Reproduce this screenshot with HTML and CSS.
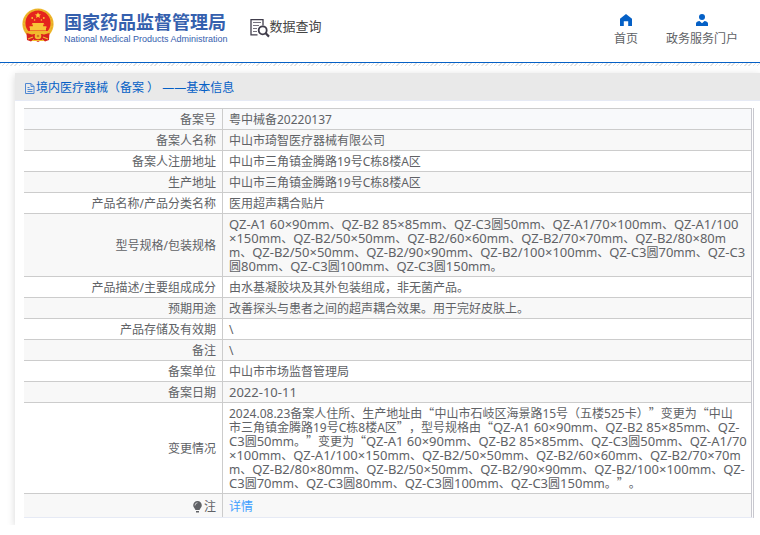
FILE: index.html
```html
<!DOCTYPE html>
<html lang="zh-CN">
<head>
<meta charset="utf-8">
<meta name="viewport" content="width=device-width, initial-scale=1">
<title>国家药品监督管理局 数据查询</title>
<link rel="stylesheet" href="styles.css">
</head>
<body>
<header class="site-header">
  <div class="brand">
    <svg class="emblem" viewBox="0 0 32 34" aria-hidden="true">
      <circle cx="16" cy="16" r="15.6" fill="#f0b92c"/>
      <circle cx="16" cy="16" r="14.2" fill="none" stroke="#e0a426" stroke-width="1" stroke-dasharray="2 1.5"/>
      <circle cx="16" cy="15" r="12.6" fill="#e5241d"/>
      <path d="M16 4.200l.9 2 2.100.2-1.600 1.400.5 2.100-1.900-1.100-1.900 1.100.5-2.100L13 6.400l2.100-.2z" fill="#ffd23a"/>
      <g fill="#ffc933"><circle cx="10.2" cy="10" r=".9"/><circle cx="12.6" cy="12" r=".8"/><circle cx="19.4" cy="12" r=".8"/><circle cx="21.8" cy="10" r=".9"/></g>
      <path d="M10.500 15h11l1 1.600h-1.300v1.600h3l.8 1.300h-1v3H8v-3H7l.8-1.300h3v-1.600H9.500z" fill="#f8c538"/>
      <path d="M5 23h22l-2 3H7z" fill="#f0b92c"/>
      <path d="M4.500 25l7 2 4.500-1.500 4.500 1.500 7-2-.5 7-4 1.500-2.500-2L16 34l-4.500-2.500-2.500 2L5 32z" fill="#d8231d"/>
      <circle cx="16" cy="28" r="3.300" fill="#f3bc31"/>
      <circle cx="16" cy="28" r="1.300" fill="#cf7a20"/>
      <path d="M6 31l5-2M26 31l-5-2M10 32.500h12" stroke="#f3bc31" stroke-width="1.200"/>
    </svg>
    <div class="brand-text">
      <div class="brand-name">国家药品监督管理局</div>
      <div class="brand-sub">National Medical Products Administration</div>
    </div>
  </div>
  <div class="section-name">
    <svg class="query-icon" viewBox="0 0 20 20" aria-hidden="true" fill="none" stroke="#403d4b">
      <path d="M13 7.500V1.600H1v15.200h6.500" stroke-width="1.300"/>
      <path d="M3 4.500h8M3 7.500h6M3 10.500h4M3 13.500h4" stroke="#77747f"/>
      <circle cx="12.700" cy="12.300" r="4" stroke-width="1.800"/>
      <path d="M15.700 15.300l3.300 3.300" stroke-width="2.200"/>
    </svg>
    <span>数据查询</span>
  </div>
  <nav class="site-nav">
    <a href="#">
      <svg viewBox="0 0 12 12" aria-hidden="true"><path d="M6 0l6 4.800V12H8.200V7.200H3.800V12H0V4.800z" fill="#0560c6"/></svg>
      <span>首页</span>
    </a>
    <a href="#">
      <svg viewBox="0 0 12 12" aria-hidden="true"><circle cx="6" cy="3" r="3" fill="#0560c6"/><path d="M0 12V9.500C0 8 1.800 7 3.500 7L6 9.200 8.500 7C10.200 7 12 8 12 9.500V12z" fill="#0560c6"/></svg>
      <span>政务服务门户</span>
    </a>
  </nav>
</header>
<div class="hatch"></div>
<main class="panel">
  <h1 class="panel-title">
    <svg viewBox="0 0 10 12" aria-hidden="true" fill="none" stroke="#5088d2"><path d="M.5 1.500h5.500l3 3v7H.5zM6 1.500v3h3M2.500 5.500h2M2.500 7.500h5M2.500 9.500h5"/></svg>
    <span>境内医疗器械（备案 ） ——基本信息</span>
  </h1>
  <div class="table-frame">
    <table class="info">
      <tbody>
        <tr class="first"><th scope="row">备案号</th><td>粤中械备20220137</td></tr>
        <tr><th scope="row">备案人名称</th><td>中山市琦智医疗器械有限公司</td></tr>
        <tr><th scope="row">备案人注册地址</th><td>中山市三角镇金腾路19号C栋8楼A区</td></tr>
        <tr><th scope="row">生产地址</th><td>中山市三角镇金腾路19号C栋8楼A区</td></tr>
        <tr><th scope="row">产品名称/产品分类名称</th><td>医用超声耦合贴片</td></tr>
        <tr><th scope="row">型号规格/包装规格</th><td><span class="code">QZ-A1 60×90</span>mm、<span class="code">QZ-B2 85×85</span>mm、<span class="code">QZ-C3</span>圆<span class="code">50</span>mm、<span class="code">QZ-A1/70×100</span>mm、<span class="code">QZ-A1/100<br>×150</span>mm、<span class="code">QZ-B2/50×50</span>mm、<span class="code">QZ-B2/60×60</span>mm、<span class="code">QZ-B2/70×70</span>mm、<span class="code">QZ-B2/80×80</span>m<br>m、<span class="code">QZ-B2/50×50</span>mm、<span class="code">QZ-B2/90×90</span>mm、<span class="code">QZ-B2/100×100</span>mm、<span class="code">QZ-C3</span>圆<span class="code">70</span>mm、<span class="code">QZ-C3</span><br>圆<span class="code">80</span>mm、<span class="code">QZ-C3</span>圆<span class="code">100</span>mm、<span class="code">QZ-C3</span>圆<span class="code">150</span>mm。</td></tr>
        <tr><th scope="row">产品描述/主要组成成分</th><td>由水基凝胶块及其外包装组成，非无菌产品。</td></tr>
        <tr><th scope="row">预期用途</th><td>改善探头与患者之间的超声耦合效果。用于完好皮肤上。</td></tr>
        <tr><th scope="row">产品存储及有效期</th><td>\</td></tr>
        <tr><th scope="row">备注</th><td>\</td></tr>
        <tr><th scope="row">备案单位</th><td>中山市市场监督管理局</td></tr>
        <tr><th scope="row">备案日期</th><td><span class="code">2022-10-11</span></td></tr>
        <tr><th scope="row">变更情况</th><td>2024.08.23备案人住所、生产地址由<span class="quote">“</span>中山市石岐区海景路15号（五楼525卡）<span class="quote">”</span>变更为<span class="quote">“</span>中山<br>市三角镇金腾路19号C栋8楼A区<span class="quote">”</span>，型号规格由<span class="quote">“</span><span class="code">QZ-A1 60×90</span>mm、<span class="code">QZ-B2 85×85</span>mm、<span class="code">QZ-<br>C3</span>圆<span class="code">50</span>mm。<span class="quote">”</span>变更为<span class="quote">“</span><span class="code">QZ-A1 60×90</span>mm、<span class="code">QZ-B2 85×85</span>mm、<span class="code">QZ-C3</span>圆<span class="code">50</span>mm、<span class="code">QZ-A1/70<br>×100</span>mm、<span class="code">QZ-A1/100×150</span>mm、<span class="code">QZ-B2/50×50</span>mm、<span class="code">QZ-B2/60×60</span>mm、<span class="code">QZ-B2/70×70</span>m<br>m、<span class="code">QZ-B2/80×80</span>mm、<span class="code">QZ-B2/50×50</span>mm、<span class="code">QZ-B2/90×90</span>mm、<span class="code">QZ-B2/100×100</span>mm、<span class="code">QZ-<br>C3</span>圆<span class="code">70</span>mm、<span class="code">QZ-C3</span>圆<span class="code">80</span>mm、<span class="code">QZ-C3</span>圆<span class="code">100</span>mm、<span class="code">QZ-C3</span>圆<span class="code">150</span>mm。<span class="quote">”</span>。</td></tr>
        <tr class="last"><th scope="row"><svg class="bulb" viewBox="0 0 9 12" aria-hidden="true" fill="#606266"><path d="M4.500 0A4.300 4.300 0 0 1 8.800 4.300C8.800 6.500 7 7.500 6.500 9h-4C2 7.500.2 6.500.2 4.300A4.300 4.300 0 0 1 4.500 0zM3 10h3v1.500H3z"/><path d="M2 4.500Q2 2 4.500 1.800" fill="none" stroke="#f8f8f8" stroke-width=".7"/></svg>注</th><td><a href="#">详情</a></td></tr>
      </tbody>
    </table>
  </div>
</main>
</body>
</html>
```
FILE: styles.css
```css
* {
  box-sizing: border-box;
}

body {
  margin: 0;
  background: #fff;
  color: #606266;
  font: 12px/14px "Noto Sans", "Noto Sans CJK SC", sans-serif;
  text-spacing-trim: space-all;
}

a {
  text-decoration: none;
}

.site-header {
  display: flex;
  align-items: flex-start;
  height: 63px;
  padding: 8px 22px;
  border-bottom: 1px solid #0560c6;
}

.brand {
  display: flex;
  gap: 10px;
}

.emblem {
  width: 32px;
  height: 34px;
}

.brand-text {
  padding-top: 3px;
  color: #3560ae;
  white-space: nowrap;
}

.brand-name {
  font: bold 18px/20px "Noto Sans CJK SC", sans-serif;
}

.brand-sub {
  font: 9px/16px "Liberation Sans", sans-serif;
}

.section-name {
  display: flex;
  align-items: flex-start;
  margin: 8px 0 0 22px;
  color: #444;
  font: 13px/20px "Noto Sans CJK SC", sans-serif;
}

.query-icon {
  width: 20px;
  height: 20px;
  margin-top: 2px;
}

.site-nav {
  display: flex;
  gap: 28px;
  margin: 6px 0 0 auto;
}

.site-nav a {
  display: flex;
  flex-direction: column;
  align-items: center;
  gap: 6px;
  color: #606266;
}

.site-nav svg {
  width: 12px;
  height: 12px;
}

.hatch {
  height: 3px;
  background: repeating-linear-gradient(135deg, #e2e2e2 0 1px, #fff 1px 3px);
}

.panel {
  margin: 7px 0 0 15px;
  background: #fff;
  box-shadow: 0 2px 8px rgba(0, 0, 0, 0.16);
}

.panel-title {
  display: flex;
  align-items: center;
  height: 28px;
  margin: 0;
  padding: 2px 10px 0;
  gap: 1px;
  border-bottom: 1px solid #e6eaf5;
  background: #e9e9e9;
  color: #0560c6;
  font-size: 12px;
  font-weight: 400;
}

.panel-title svg {
  width: 10px;
  height: 12px;
}

.table-frame {
  padding: 7px 6px 7px 9px;
}

.info {
  width: 100%;
  border-right: 3px double #c8c8cf;
  border-bottom: 1px solid #e6eaf5;
  border-spacing: 0;
  table-layout: fixed;
}

.info th,
.info td {
  padding: 4px 6px 2px;
  border-top: 1px solid #ccc;
  font-weight: 400;
}

.info th {
  width: 199px;
  border-right: 1px solid #ccc;
  text-align: right;
}

.info td {
  white-space: nowrap;
}

.info tr:nth-child(even) {
  background: #f8f8f8;
}

.info .first {
  background: #f8f9fb;
}

.info .last th,
.info .last td {
  padding-top: 6px;
  padding-bottom: 3px;
}

.info a {
  color: #409eff;
}

.code {
  font-size: 13px;
  line-height: 12px;
}

.quote {
  font-family: "Noto Sans CJK SC", sans-serif;
  line-height: 12px;
}

.bulb {
  width: 9px;
  height: 12px;
  margin-right: 2px;
  vertical-align: -2px;
}
```
